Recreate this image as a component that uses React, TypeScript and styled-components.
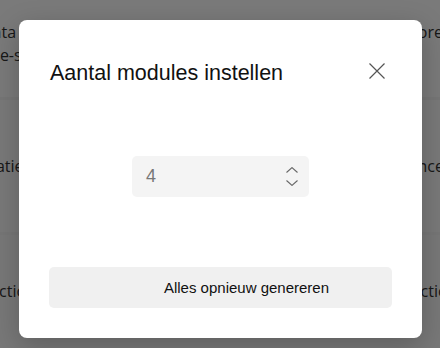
import React from "react";
import styled, { createGlobalStyle } from "styled-components";

const Global = createGlobalStyle`
  html, body { margin: 0; padding: 0; }
  body {
    width: 440px;
    height: 348px;
    overflow: hidden;
    background: #ffffff;
    font-family: "Liberation Sans", Arial, sans-serif;
  }
  #root { width: 440px; height: 348px; }
`;

const Page = styled.div`
  position: relative;
  width: 440px;
  height: 348px;
  overflow: hidden;
  background: #ffffff;
`;

const Row = styled.div<{ $h: number; $tone: string }>`
  height: ${(p) => p.$h}px;
  background: ${(p) => p.$tone};
  border-top: 3px solid #f6f6f6;
  display: flex;
  justify-content: space-between;
  align-items: ${(p) => (p.$h > 100 ? "center" : "flex-start")};
  box-sizing: border-box;
  padding-top: ${(p) => (p.$h > 100 ? 0 : 21)}px;
  &:first-child { border-top: 0; }
`;

const BgCell = styled.div<{ $align: "left" | "right" }>`
  display: flex;
  flex-direction: column;
  align-items: ${(p) => (p.$align === "left" ? "flex-start" : "flex-end")};
`;

const BgLine = styled.span<{ $align: "left" | "right"; $shift: number }>`
  font-family: "Open Sans", "Noto Sans", sans-serif;
  font-size: 16px;
  line-height: 23px;
  color: #333;
  white-space: nowrap;
  margin-left: ${(p) => (p.$align === "left" ? `${p.$shift}px` : "0")};
  margin-right: ${(p) => (p.$align === "right" ? `${p.$shift}px` : "0")};
`;

const Overlay = styled.div`
  position: absolute;
  inset: 0;
  background: rgba(0, 0, 0, 0.52);
`;

const Dialog = styled.div`
  position: absolute;
  left: 19px;
  top: 20px;
  width: 403px;
  height: 318px;
  box-sizing: border-box;
  background: #ffffff;
  border-radius: 8px;
  box-shadow: 0 8px 28px rgba(0, 0, 0, 0.22);
  padding: 41px 30px 30px 30px;
  display: flex;
  flex-direction: column;
`;

const Header = styled.div`
  height: 24px;
  display: flex;
  justify-content: space-between;
  align-items: flex-start;
`;

const Title = styled.h2`
  margin: 0 0 0 1px;
  font-family: "Liberation Sans", Arial, sans-serif;
  font-weight: 400;
  font-size: 21.5px;
  line-height: 24px;
  color: #111;
`;

const CloseButton = styled.button`
  border: 0;
  background: transparent;
  padding: 0;
  margin: 1px 7px 0 0;
  width: 17px;
  height: 17px;
  display: flex;
  align-items: center;
  justify-content: center;
  color: #555;
  cursor: pointer;
`;

const Body = styled.div`
  margin-top: 71px;
  display: flex;
  justify-content: center;
`;

const NumberBox = styled.div`
  width: 177px;
  height: 41px;
  box-sizing: border-box;
  background: #f4f4f4;
  border-radius: 5px;
  display: flex;
  align-items: center;
  padding: 0 11px 0 14px;
`;

const Value = styled.span`
  flex: 1;
  font-family: "Liberation Sans", Arial, sans-serif;
  font-size: 18px;
  color: #777;
`;

const Spinner = styled.div`
  display: flex;
  flex-direction: column;
  align-items: center;
  gap: 7px;
  color: #666;
`;

const Footer = styled.div`
  margin-top: 70px;
`;

const ActionButton = styled.button`
  width: 343px;
  height: 41px;
  border: 0;
  border-radius: 5px;
  background: #f0f0f0;
  font-family: "Liberation Sans", Arial, sans-serif;
  font-size: 15px;
  color: #111;
  padding: 0 0 0 52px;
  cursor: pointer;
`;

const Chevron = ({ up }: { up?: boolean }) => (
  <svg width="12" height="6" viewBox="0 0 12 6" fill="none">
    <path
      d={up ? "M0.5 5.5 L6 0.6 L11.5 5.5" : "M0.5 0.5 L6 5.4 L11.5 0.5"}
      stroke="currentColor"
      strokeWidth="1.1"
    />
  </svg>
);

export default function App() {
  return (
    <Page>
      <Global />
      <Row $h={97} $tone="#ffffff">
        <BgCell $align="left">
          <BgLine $align="left" $shift={-19}>Data</BgLine>
          <BgLine $align="left" $shift={-10}>Re-sync</BgLine>
        </BgCell>
        <BgCell $align="right">
          <BgLine $align="right" $shift={-3}>Score</BgLine>
        </BgCell>
      </Row>
      <Row $h={135} $tone="#fdfdfd">
        <BgCell $align="left">
          <BgLine $align="left" $shift={-68}>Configuratie</BgLine>
        </BgCell>
        <BgCell $align="right">
          <BgLine $align="right" $shift={-4}>Finance</BgLine>
        </BgCell>
      </Row>
      <Row $h={116} $tone="#fbfbfb">
        <BgCell $align="left">
          <BgLine $align="left" $shift={-11}>Actions</BgLine>
        </BgCell>
        <BgCell $align="right">
          <BgLine $align="right" $shift={-25}>Actions</BgLine>
        </BgCell>
      </Row>
      <Overlay />
      <Dialog role="dialog" aria-modal="true">
        <Header>
          <Title>Aantal modules instellen</Title>
          <CloseButton aria-label="Sluiten">
            <svg width="16" height="16" viewBox="0 0 16 16" fill="none">
              <path d="M0.5 0.5 L15.5 15.5 M15.5 0.5 L0.5 15.5" stroke="currentColor" strokeWidth="1.2" />
            </svg>
          </CloseButton>
        </Header>
        <Body>
          <NumberBox>
            <Value>4</Value>
            <Spinner>
              <Chevron up />
              <Chevron />
            </Spinner>
          </NumberBox>
        </Body>
        <Footer>
          <ActionButton>Alles opnieuw genereren</ActionButton>
        </Footer>
      </Dialog>
    </Page>
  );
}
